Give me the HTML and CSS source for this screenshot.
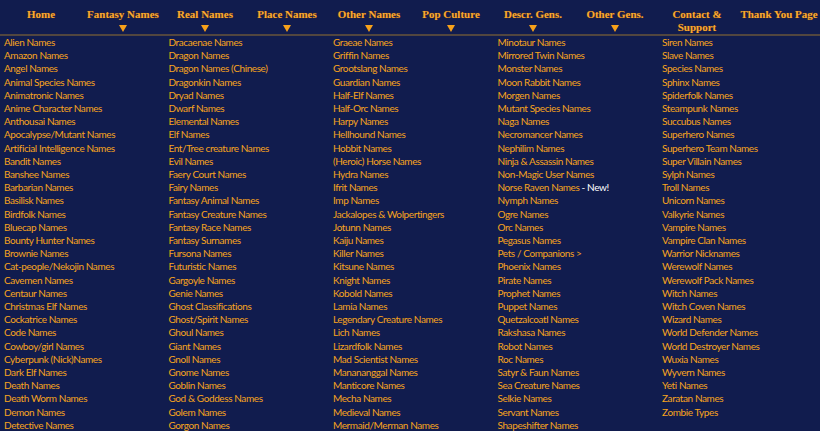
FILE: index.html
```html
<!DOCTYPE html>
<html>
<head>
<meta charset="utf-8">
<link rel="stylesheet" href="styles.css">
</head>
<body>
<nav class="nav">
  <div class="nav-item"><span class="nav-label">Home</span></div>
  <div class="nav-item"><span class="nav-label">Fantasy Names</span><svg class="arrow" viewBox="0 0 8 7"><polygon points="0,0 8,0 4,7"/></svg></div>
  <div class="nav-item"><span class="nav-label">Real Names</span><svg class="arrow" viewBox="0 0 8 7"><polygon points="0,0 8,0 4,7"/></svg></div>
  <div class="nav-item"><span class="nav-label">Place Names</span><svg class="arrow" viewBox="0 0 8 7"><polygon points="0,0 8,0 4,7"/></svg></div>
  <div class="nav-item"><span class="nav-label">Other Names</span><svg class="arrow" viewBox="0 0 8 7"><polygon points="0,0 8,0 4,7"/></svg></div>
  <div class="nav-item"><span class="nav-label">Pop Culture</span><svg class="arrow" viewBox="0 0 8 7"><polygon points="0,0 8,0 4,7"/></svg></div>
  <div class="nav-item"><span class="nav-label">Descr. Gens.</span><svg class="arrow" viewBox="0 0 8 7"><polygon points="0,0 8,0 4,7"/></svg></div>
  <div class="nav-item"><span class="nav-label">Other Gens.</span><svg class="arrow" viewBox="0 0 8 7"><polygon points="0,0 8,0 4,7"/></svg></div>
  <div class="nav-item"><span class="nav-label">Contact &amp;<br>Support</span></div>
  <div class="nav-item"><span class="nav-label">Thank You Page</span></div>
</nav>
<main class="lists">
  <ul class="col">
    <li>Alien Names</li><li>Amazon Names</li><li>Angel Names</li><li>Animal Species Names</li><li>Animatronic Names</li><li>Anime Character Names</li><li>Anthousai Names</li><li>Apocalypse/Mutant Names</li><li>Artificial Intelligence Names</li><li>Bandit Names</li><li>Banshee Names</li><li>Barbarian Names</li><li>Basilisk Names</li><li>Birdfolk Names</li><li>Bluecap Names</li><li>Bounty Hunter Names</li><li>Brownie Names</li><li>Cat-people/Nekojin Names</li><li>Cavemen Names</li><li>Centaur Names</li><li>Christmas Elf Names</li><li>Cockatrice Names</li><li>Code Names</li><li>Cowboy/girl Names</li><li>Cyberpunk (Nick)Names</li><li>Dark Elf Names</li><li>Death Names</li><li>Death Worm Names</li><li>Demon Names</li><li>Detective Names</li>
  </ul>
  <ul class="col">
    <li>Dracaenae Names</li><li>Dragon Names</li><li>Dragon Names (Chinese)</li><li>Dragonkin Names</li><li>Dryad Names</li><li>Dwarf Names</li><li>Elemental Names</li><li>Elf Names</li><li>Ent/Tree creature Names</li><li>Evil Names</li><li>Faery Court Names</li><li>Fairy Names</li><li>Fantasy Animal Names</li><li>Fantasy Creature Names</li><li>Fantasy Race Names</li><li>Fantasy Surnames</li><li>Fursona Names</li><li>Futuristic Names</li><li>Gargoyle Names</li><li>Genie Names</li><li>Ghost Classifications</li><li>Ghost/Spirit Names</li><li>Ghoul Names</li><li>Giant Names</li><li>Gnoll Names</li><li>Gnome Names</li><li>Goblin Names</li><li>God &amp; Goddess Names</li><li>Golem Names</li><li>Gorgon Names</li>
  </ul>
  <ul class="col">
    <li>Graeae Names</li><li>Griffin Names</li><li>Grootslang Names</li><li>Guardian Names</li><li>Half-Elf Names</li><li>Half-Orc Names</li><li>Harpy Names</li><li>Hellhound Names</li><li>Hobbit Names</li><li>(Heroic) Horse Names</li><li>Hydra Names</li><li>Ifrit Names</li><li>Imp Names</li><li>Jackalopes &amp; Wolpertingers</li><li>Jotunn Names</li><li>Kaiju Names</li><li>Killer Names</li><li>Kitsune Names</li><li>Knight Names</li><li>Kobold Names</li><li>Lamia Names</li><li>Legendary Creature Names</li><li>Lich Names</li><li>Lizardfolk Names</li><li>Mad Scientist Names</li><li>Manananggal Names</li><li>Manticore Names</li><li>Mecha Names</li><li>Medieval Names</li><li>Mermaid/Merman Names</li>
  </ul>
  <ul class="col">
    <li>Minotaur Names</li><li>Mirrored Twin Names</li><li>Monster Names</li><li>Moon Rabbit Names</li><li>Morgen Names</li><li>Mutant Species Names</li><li>Naga Names</li><li>Necromancer Names</li><li>Nephilim Names</li><li>Ninja &amp; Assassin Names</li><li>Non-Magic User Names</li><li>Norse Raven Names <span class="new">- New!</span></li><li>Nymph Names</li><li>Ogre Names</li><li>Orc Names</li><li>Pegasus Names</li><li>Pets / Companions &gt;</li><li>Phoenix Names</li><li>Pirate Names</li><li>Prophet Names</li><li>Puppet Names</li><li>Quetzalcoatl Names</li><li>Rakshasa Names</li><li>Robot Names</li><li>Roc Names</li><li>Satyr &amp; Faun Names</li><li>Sea Creature Names</li><li>Selkie Names</li><li>Servant Names</li><li>Shapeshifter Names</li>
  </ul>
  <ul class="col">
    <li>Siren Names</li><li>Slave Names</li><li>Species Names</li><li>Sphinx Names</li><li>Spiderfolk Names</li><li>Steampunk Names</li><li>Succubus Names</li><li>Superhero Names</li><li>Superhero Team Names</li><li>Super Villain Names</li><li>Sylph Names</li><li>Troll Names</li><li>Unicorn Names</li><li>Valkyrie Names</li><li>Vampire Names</li><li>Vampire Clan Names</li><li>Warrior Nicknames</li><li>Werewolf Names</li><li>Werewolf Pack Names</li><li>Witch Names</li><li>Witch Coven Names</li><li>Wizard Names</li><li>World Defender Names</li><li>World Destroyer Names</li><li>Wuxia Names</li><li>Wyvern Names</li><li>Yeti Names</li><li>Zaratan Names</li><li>Zombie Types</li>
  </ul>
</main>
</body>
</html>
```
FILE: styles.css
```css
html, body {
  margin: 0;
  padding: 0;
  background: #111c4e;
  height: 100%;
  overflow: hidden;
}
body {
  font-family: Lato, "Open Sans", sans-serif;
  color: #f7a41d;
}
.nav {
  display: grid;
  grid-template-columns: repeat(10, 1fr);
  padding-top: 8px;
  height: 26px;
  border-bottom: 2px solid #52463f;
  text-shadow: 0 0 1px #7a3d00;
}
.nav-item {
  display: flex;
  flex-direction: column;
  align-items: center;
  text-align: center;
}
.nav-label {
  font-family: "Liberation Serif", "DejaVu Serif", serif;
  font-weight: bold;
  font-size: 11px;
  line-height: 13px;
  color: #f8a933;
}
.arrow {
  width: 8px;
  height: 7px;
  margin-top: 4px;
  fill: #f7a11a;
}
.lists {
  display: grid;
  grid-template-columns: repeat(5, 164.5px);
  padding-top: 0;
}
.col {
  list-style: none;
  margin: 0;
  padding: 0 0 0 4px;
}
.col li {
  font-size: 10px;
  letter-spacing: -0.4px;
  line-height: 13.2px;
  white-space: nowrap;
}
.new {
  color: #ffffff;
}
```
